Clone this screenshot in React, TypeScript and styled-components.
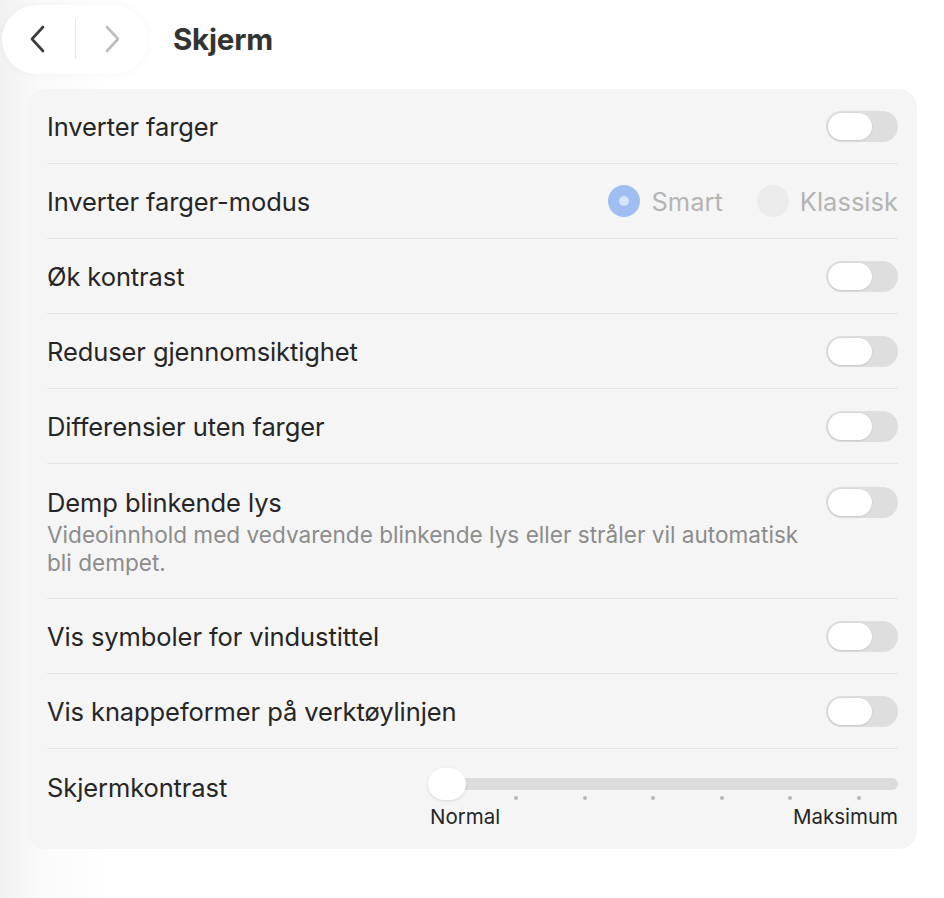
import React from 'react';
import styled, { createGlobalStyle } from 'styled-components';

const GlobalStyle = createGlobalStyle`
	html, body {
		margin: 0;
		padding: 0;
		background: #ffffff;
	}
	body {
		font-family: Inter, 'Liberation Sans', sans-serif;
		color: #262626;
	}
`;

const Page = styled.div`
	width: 944px;
	height: 898px;
	box-sizing: border-box;
	background: linear-gradient(90deg, #f1f1f1 0px, #fafafa 40px, #ffffff 110px);
	overflow: hidden;
`;

const Header = styled.header`
	display: flex;
	align-items: center;
	gap: 25px;
	height: 78px;
	padding: 0 0 0 2px;
`;

const NavPill = styled.div`
	display: flex;
	align-items: center;
	width: 146px;
	height: 69px;
	border-radius: 35px;
	background: #ffffff;
	box-shadow: 0 0 10px rgba(0, 0, 0, 0.04);
`;

const NavButton = styled.button`
	flex: 1;
	display: flex;
	align-items: center;
	justify-content: center;
	height: 100%;
	border: 0;
	background: transparent;
	padding: 0;
	color: ${p => (p.disabled ? '#bdbdbd' : '#3a3a3a')};
`;

const NavDivider = styled.span`
	width: 1px;
	height: 40px;
	background: #e6e6e6;
`;

const Title = styled.h1`
	margin: 0;
	font-size: 29.5px;
	font-weight: 700;
	color: #333333;
	letter-spacing: -0.2px;
`;

const Card = styled.section`
	margin: 11px 0 0 27px;
	width: 890px;
	box-sizing: border-box;
	padding: 0 19px 0 20px;
	border-radius: 18px;
	background: #f5f5f5;
`;

const Row = styled.div<{ $tall?: boolean }>`
	display: flex;
	align-items: ${p => (p.$tall ? 'flex-start' : 'center')};
	justify-content: space-between;
	min-height: 75px;
	box-sizing: border-box;
	padding: ${p => (p.$tall ? '23px 0 0' : '0')};
	height: ${p => (p.$tall ? '135px' : 'auto')};
	border-bottom: 1px solid #e4e4e4;
`;

const LabelBlock = styled.div`
	display: flex;
	flex-direction: column;
	gap: 3px;
`;

const Label = styled.span`
	font-size: 25.5px;
	line-height: 31px;
	color: #262626;
	letter-spacing: -0.1px;
`;

const Description = styled.p`
	margin: 0;
	max-width: 760px;
	font-size: 22.6px;
	line-height: 28px;
	color: #8c8c8c;
`;

const Track = styled.span`
	display: flex;
	align-items: center;
	width: 72px;
	height: 31px;
	box-sizing: border-box;
	padding: 2px;
	border-radius: 16px;
	background: #dedede;
`;

const Knob = styled.span`
	width: 44px;
	height: 27px;
	border-radius: 14px;
	background: #ffffff;
	box-shadow: 0 1px 2px rgba(0, 0, 0, 0.08), 0 0 0 0.5px rgba(0, 0, 0, 0.04);
`;

const RadioGroup = styled.div`
	display: flex;
	align-items: center;
	gap: 34px;
`;

const RadioOption = styled.label`
	display: flex;
	align-items: center;
	gap: 11px;
	font-size: 25.5px;
	color: #b4b4b4;
`;

const RadioDot = styled.span<{ $checked?: boolean }>`
	display: flex;
	align-items: center;
	justify-content: center;
	width: 32px;
	height: 32px;
	border-radius: 50%;
	background: ${p => (p.$checked ? '#9fbff3' : '#ebebeb')};

	&::after {
		content: '';
		display: ${p => (p.$checked ? 'block' : 'none')};
		width: 10px;
		height: 10px;
		border-radius: 50%;
		background: #d6e3fa;
	}
`;

const SliderRow = styled.div`
	display: flex;
	align-items: flex-start;
	justify-content: space-between;
	height: 100px;
	padding-top: 23px;
	box-sizing: border-box;
`;

const Slider = styled.div`
	display: flex;
	flex-direction: column;
	width: 470px;
	margin-top: -4px;
`;

const SliderTrack = styled.div`
	position: relative;
	height: 12px;
	margin: 10px 0 0 2px;
	border-radius: 6px;
	background: #dcdcdc;
`;

const SliderThumb = styled.span`
	position: absolute;
	left: -2px;
	top: -10px;
	width: 38px;
	height: 32px;
	border-radius: 16px;
	background: #ffffff;
	box-shadow: 0 1px 3px rgba(0, 0, 0, 0.12);
`;

const Ticks = styled.div`
	display: flex;
	justify-content: space-between;
	height: 4px;
	margin: 6px 0 0 86px;
	padding-right: 37px;
`;

const Tick = styled.span`
	width: 4px;
	height: 4px;
	border-radius: 50%;
	background: #b8b8b8;
`;

const SliderLabels = styled.div`
	display: flex;
	justify-content: space-between;
	margin-top: 4px;
	padding-left: 2px;
	font-size: 20.5px;
	color: #262626;
`;

const Toggle = () => (
	<Track>
		<Knob />
	</Track>
);

const Chevron = ({ dir }: { dir: 'left' | 'right' }) => (
	<svg width="20" height="30" viewBox="0 0 20 30" fill="none">
		<path
			d={dir === 'left' ? 'M15 3 L4 15 L15 27' : 'M5 3 L16 15 L5 27'}
			stroke="currentColor"
			strokeWidth="2.6"
			strokeLinecap="round"
			strokeLinejoin="round"
		/>
	</svg>
);

const toggles = [
	'Inverter farger',
	'Inverter farger-modus',
	'Øk kontrast',
	'Reduser gjennomsiktighet',
	'Differensier uten farger',
];

export default function App() {
	return (
		<Page>
			<GlobalStyle />
			<Header>
				<NavPill>
					<NavButton aria-label="Tilbake">
						<Chevron dir="left" />
					</NavButton>
					<NavDivider />
					<NavButton disabled aria-label="Frem">
						<Chevron dir="right" />
					</NavButton>
				</NavPill>
				<Title>Skjerm</Title>
			</Header>
			<Card>
				{toggles.map(label => (
					<Row key={label}>
						<Label>{label}</Label>
						{label === 'Inverter farger-modus' ? (
							<RadioGroup>
								<RadioOption>
									<RadioDot $checked />
									Smart
								</RadioOption>
								<RadioOption>
									<RadioDot />
									Klassisk
								</RadioOption>
							</RadioGroup>
						) : (
							<Toggle />
						)}
					</Row>
				))}
				<Row $tall>
					<LabelBlock>
						<Label>Demp blinkende lys</Label>
						<Description>
							Videoinnhold med vedvarende blinkende lys eller stråler vil automatisk bli dempet.
						</Description>
					</LabelBlock>
					<Toggle />
				</Row>
				<Row>
					<Label>Vis symboler for vindustittel</Label>
					<Toggle />
				</Row>
				<Row>
					<Label>Vis knappeformer på verktøylinjen</Label>
					<Toggle />
				</Row>
				<SliderRow>
					<Label>Skjermkontrast</Label>
					<Slider>
						<SliderTrack>
							<SliderThumb />
						</SliderTrack>
						<Ticks>
							{Array.from({ length: 6 }).map((_, i) => (
								<Tick key={i} />
							))}
						</Ticks>
						<SliderLabels>
							<span>Normal</span>
							<span>Maksimum</span>
						</SliderLabels>
					</Slider>
				</SliderRow>
			</Card>
		</Page>
	);
}
